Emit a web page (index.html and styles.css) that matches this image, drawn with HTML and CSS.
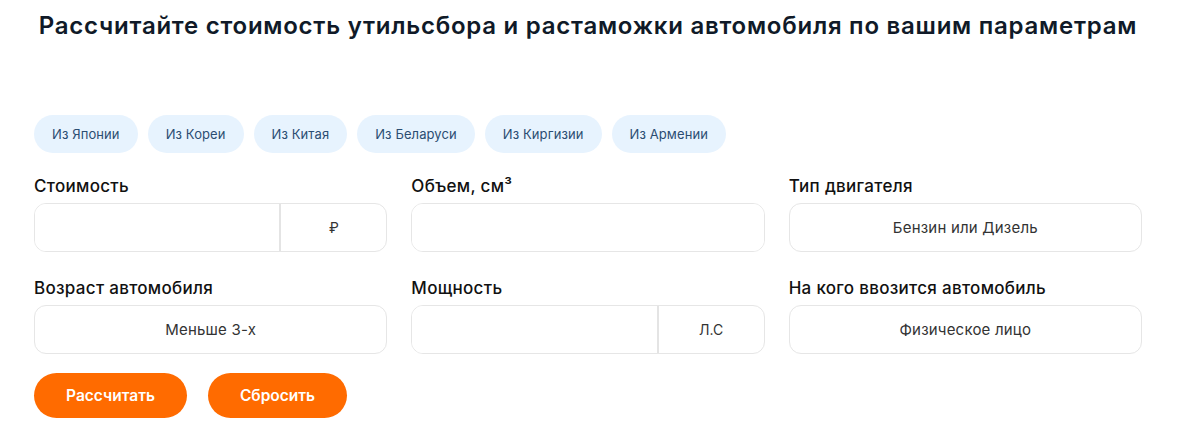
FILE: index.html
```html
<!DOCTYPE html>
<html>
<head>
	<title>Калькулятор растаможки</title>
	<link rel="stylesheet" href="styles.css">
</head>
<body>
	<div class="calc">
		<h1 class="calc-title">Рассчитайте стоимость утильсбора и растаможки автомобиля по вашим параметрам</h1>

		<div class="tabs">
			<button type="button" class="tab">Из Японии</button>
			<button type="button" class="tab">Из Кореи</button>
			<button type="button" class="tab">Из Китая</button>
			<button type="button" class="tab">Из Беларуси</button>
			<button type="button" class="tab">Из Киргизии</button>
			<button type="button" class="tab">Из Армении</button>
		</div>

		<div class="fields">
			<div class="field">
				<div class="label">Стоимость</div>
				<div class="box split">
					<input type="text" class="box-input">
					<div class="unit">₽</div>
				</div>
			</div>
			<div class="field">
				<div class="label">Объем, см³</div>
				<div class="box">
					<input type="text" class="box-input">
				</div>
			</div>
			<div class="field">
				<div class="label">Тип двигателя</div>
				<div class="box select">Бензин или Дизель</div>
			</div>
			<div class="field">
				<div class="label">Возраст автомобиля</div>
				<div class="box select">Меньше 3-х</div>
			</div>
			<div class="field">
				<div class="label">Мощность</div>
				<div class="box split">
					<input type="text" class="box-input">
					<div class="unit">Л.С</div>
				</div>
			</div>
			<div class="field">
				<div class="label">На кого ввозится автомобиль</div>
				<div class="box select">Физическое лицо</div>
			</div>
		</div>

		<div class="actions">
			<button type="button" class="btn btn-calc">Рассчитать</button>
			<button type="button" class="btn btn-reset">Сбросить</button>
		</div>
	</div>
</body>
</html>
```

FILE: styles.css
```css
body{
	margin: 0;
	background: #fff;
	font-family: Inter, "Noto Sans", sans-serif;
	color: #111;
}
.calc{
	width: 1108px;
	margin: 0 0 0 34px;
	padding-top: 10px;
}
.calc-title{
	margin: 0;
	font-size: 24px;
	line-height: 32px;
	font-weight: 600;
	color: #101a28;
	text-align: center;
	letter-spacing: 0.75px;
	white-space: nowrap;
}
.tabs{
	display: flex;
	gap: 10px;
	margin-top: 73px;
}
.tab{
	height: 38px;
	padding: 0 18px;
	border: none;
	border-radius: 19px;
	background: #e7f3fe;
	color: #2b4d72;
	font-family: inherit;
	font-size: 13px;
	letter-spacing: 0.1px;
}
.fields{
	display: grid;
	grid-template-columns: repeat(3, minmax(0, 1fr));
	column-gap: 24px;
	row-gap: 26px;
	margin-top: 23px;
}
.label{
	font-size: 17px;
	line-height: 20px;
	font-weight: 500;
	margin-bottom: 7px;
	letter-spacing: 0.3px;
}
.box{
	display: flex;
	height: 47px;
	border: 1px solid #e6e6e6;
	border-radius: 12px;
	overflow: hidden;
}
.box-input{
	flex: 1;
	width: 0;
	min-width: 0;
	border: none;
	outline: none;
	padding: 0 14px;
	font-family: inherit;
	font-size: 15px;
}
.unit{
	width: 105px;
	border-left: 2px solid #e4e4e4;
	display: flex;
	align-items: center;
	justify-content: center;
	font-size: 14px;
	color: #333;
}
.select{
	align-items: center;
	justify-content: center;
	font-size: 15px;
	color: #333;
	letter-spacing: 0.2px;
}
.actions{
	display: flex;
	gap: 21px;
	margin-top: 19px;
}
.btn{
	height: 45px;
	border: none;
	border-radius: 23px;
	background: #ff6b00;
	color: #fff;
	font-family: inherit;
	font-size: 15.5px;
	font-weight: 600;
}
.btn-calc{
	width: 153px;
}
.btn-reset{
	width: 139px;
}
```
